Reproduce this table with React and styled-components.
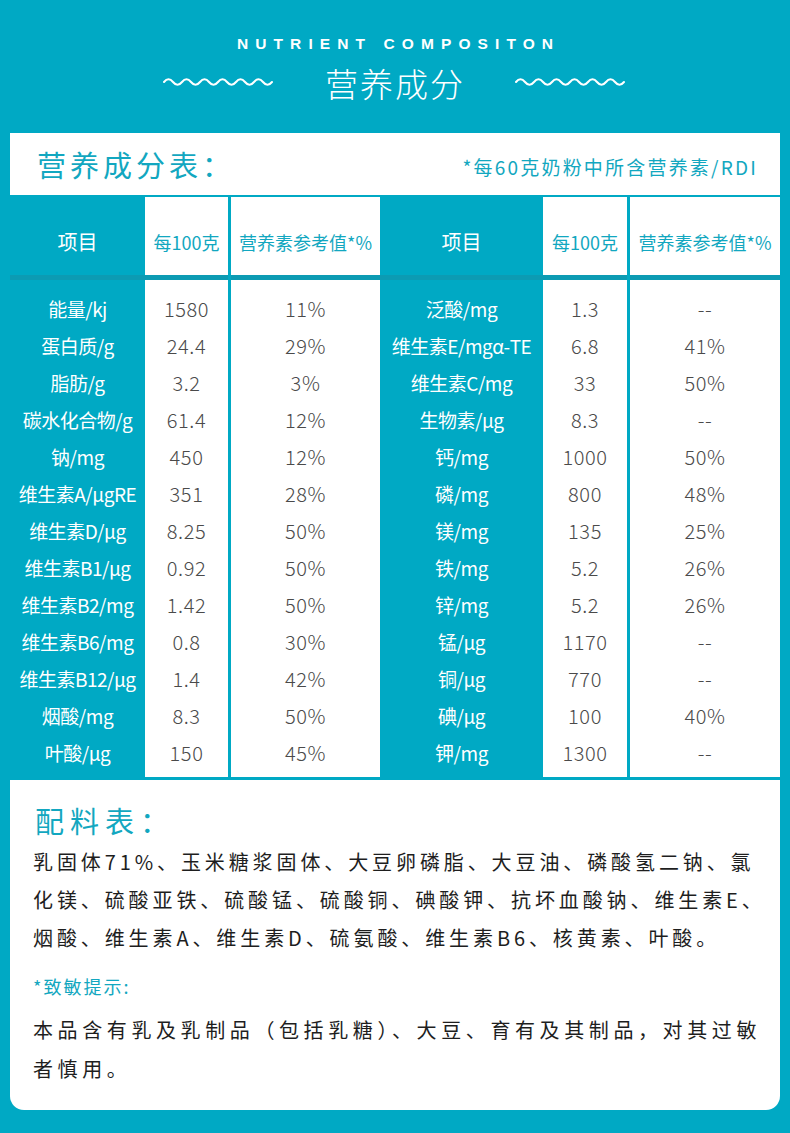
import React from 'react';
import styled, { createGlobalStyle } from 'styled-components';

const TEAL = '#00a9c4';
const TEAL_TEXT = '#12a7c0';
const LINE = '#0c9bb3';

const GlobalStyle = createGlobalStyle`
    html, body
    {
        margin: 0;
        padding: 0;
        background: ${TEAL};
    }

    body
    {
        font-family: "Noto Sans CJK SC", "Noto Sans", sans-serif;
    }
`

const left = [
    ['能量/kj', '1580', '11%'],
    ['蛋白质/g', '24.4', '29%'],
    ['脂肪/g', '3.2', '3%'],
    ['碳水化合物/g', '61.4', '12%'],
    ['钠/mg', '450', '12%'],
    ['维生素A/μgRE', '351', '28%'],
    ['维生素D/μg', '8.25', '50%'],
    ['维生素B1/μg', '0.92', '50%'],
    ['维生素B2/mg', '1.42', '50%'],
    ['维生素B6/mg', '0.8', '30%'],
    ['维生素B12/μg', '1.4', '42%'],
    ['烟酸/mg', '8.3', '50%'],
    ['叶酸/μg', '150', '45%'],
];

const right = [
    ['泛酸/mg', '1.3', '--'],
    ['维生素E/mgα-TE', '6.8', '41%'],
    ['维生素C/mg', '33', '50%'],
    ['生物素/μg', '8.3', '--'],
    ['钙/mg', '1000', '50%'],
    ['磷/mg', '800', '48%'],
    ['镁/mg', '135', '25%'],
    ['铁/mg', '5.2', '26%'],
    ['锌/mg', '5.2', '26%'],
    ['锰/μg', '1170', '--'],
    ['铜/μg', '770', '--'],
    ['碘/μg', '100', '40%'],
    ['钾/mg', '1300', '--'],
];

function Wave()
{
    let d = 'M1 6';
    for (let i = 0; i < 12; i++)
    {
        d += i === 0 ? ' Q5.5 0.5 10 6' : ' T' + (10 + i * 9) + ' 6';
    }
    return(
        <svg width="112" height="12" viewBox="0 0 112 12">
            <path d={d} fill="none" stroke="#fff" strokeWidth="2" strokeLinecap="round" />
        </svg>
    );
}

function Column({ width, white, gap, head, headColor, values, kind })
{
    return(
        <Col $width={width} $white={white} $gap={gap}>
            <HeadCell $color={headColor} $big={!white}>{head}</HeadCell>
            <Divider />
            <Body>
                {values.map((v, i) => (
                    <Cell key={i} $kind={kind}>{v}</Cell>
                ))}
            </Body>
        </Col>
    );
}

function App()
{
    return(
        <Page>
            <GlobalStyle />
            <Hero>
                <EnTitle>NUTRIENT COMPOSITON</EnTitle>
                <TitleRow>
                    <Wave />
                    <CnTitle>营养成分</CnTitle>
                    <Wave />
                </TitleRow>
            </Hero>

            <TableHead>
                <BoxTitle>营养成分表：</BoxTitle>
                <Note>*每60克奶粉中所含营养素/RDI</Note>
            </TableHead>

            <Table>
                <Column width={135} head="项目" headColor="#fff" kind="name" values={left.map(r => r[0])} />
                <Column width={83} white head="每100克" headColor={TEAL_TEXT} kind="num" values={left.map(r => r[1])} />
                <Column width={149} white gap head="营养素参考值*%" headColor={TEAL_TEXT} kind="num" values={left.map(r => r[2])} />
                <Column width={163} head="项目" headColor="#fff" kind="name" values={right.map(r => r[0])} />
                <Column width={84} white head="每100克" headColor={TEAL_TEXT} kind="num" values={right.map(r => r[1])} />
                <Column width={150} white gap head="营养素参考值*%" headColor={TEAL_TEXT} kind="num" values={right.map(r => r[2])} />
            </Table>

            <Ingredients>
                <BoxTitle $wide>配料表：</BoxTitle>
                <Text>
                    <Line>乳固体71%、玉米糖浆固体、大豆卵磷脂、大豆油、磷酸氢二钠、氯</Line>
                    <Line>化镁、硫酸亚铁、硫酸锰、硫酸铜、碘酸钾、抗坏血酸钠、维生素E、</Line>
                    <Line>烟酸、维生素A、维生素D、硫氨酸、维生素B6、核黄素、叶酸。</Line>
                </Text>
                <Warning>*致敏提示:</Warning>
                <Text $tall>
                    <Line>本品含有乳及乳制品（包括乳糖）、大豆、育有及其制品，对其过敏</Line>
                    <Line>者慎用。</Line>
                </Text>
            </Ingredients>
        </Page>
    );
}

export default App;

const Page = styled.div`
    width: 790px;
    min-height: 1133px;
    background: ${TEAL};
    padding: 0 10px 23px;
    box-sizing: border-box;
    display: flex;
    flex-direction: column;
`

const Hero = styled.div`
    height: 133px;
    display: flex;
    flex-direction: column;
    align-items: center;
    color: #fff;
`

const EnTitle = styled.div`
    margin-top: 35px;
    font-family: "Liberation Sans", Arial, sans-serif;
    font-weight: 700;
    font-size: 15.5px;
    line-height: 18px;
    letter-spacing: 7.1px;
    margin-right: -7.1px;
`

const TitleRow = styled.div`
    margin-top: 10px;
    display: flex;
    align-items: center;
    gap: 50px;

    svg
    {
        margin-top: -2px;
    }
`

const CnTitle = styled.div`
    font-size: 33px;
    font-weight: 300;
    line-height: 40px;
    letter-spacing: 2px;
`

const TableHead = styled.div`
    height: 62px;
    background: #fff;
    display: flex;
    align-items: center;
    justify-content: space-between;
    padding: 0 22px 0 27px;
`

const BoxTitle = styled.div`
    color: ${TEAL_TEXT};
    font-size: 29px;
    line-height: 40px;
    letter-spacing: ${p => p.$wide ? '6px' : '4px'};
`

const Note = styled.div`
    color: ${TEAL_TEXT};
    font-size: 19px;
    letter-spacing: 2.2px;
    margin-top: 4px;
`

const Table = styled.div`
    margin-top: 2px;
    display: flex;
`

const Col = styled.div`
    width: ${p => p.$width}px;
    margin-left: ${p => p.$gap ? '3px' : '0'};
    background: ${p => p.$white ? '#fff' : 'transparent'};
    display: flex;
    flex-direction: column;
`

const HeadCell = styled.div`
    height: 78px;
    box-sizing: border-box;
    padding-top: 11px;
    display: flex;
    align-items: center;
    justify-content: center;
    color: ${p => p.$color};
    font-size: ${p => p.$big ? '20px' : '18px'};
    white-space: nowrap;
`

const Divider = styled.div`
    height: 5px;
    background: ${LINE};
`

const Body = styled.div`
    padding: 10px 0 6px;
`

const Cell = styled.div`
    height: 37px;
    display: flex;
    align-items: center;
    justify-content: center;
    white-space: nowrap;
    color: ${p => p.$kind === 'name' ? '#fff' : '#4a4a4a'};
    font-size: ${p => p.$kind === 'name' ? '19px' : '20px'};
    font-weight: ${p => p.$kind === 'name' ? 400 : 300};
    letter-spacing: ${p => p.$kind === 'name' ? '-0.5px' : '0.6px'};
`

const Ingredients = styled.div`
    margin-top: 3px;
    height: 330px;
    box-sizing: border-box;
    background: #fff;
    border-radius: 0 0 14px 14px;
    padding: 20px 20px 0 25px;
`

const Text = styled.div`
    margin-top: ${p => p.$tall ? '5px' : '3px'};
    margin-left: -2px;
    color: #1e1e1e;
    font-size: 20px;
    letter-spacing: ${p => p.$tall ? '4.6px' : '3.9px'};
    line-height: ${p => p.$tall ? '39px' : '38px'};
    white-space: nowrap;
`

const Line = styled.div``

const Warning = styled.div`
    margin-top: 10px;
    margin-left: -2px;
    color: ${TEAL_TEXT};
    font-size: 18px;
    line-height: 38px;
    letter-spacing: 2px;
`
